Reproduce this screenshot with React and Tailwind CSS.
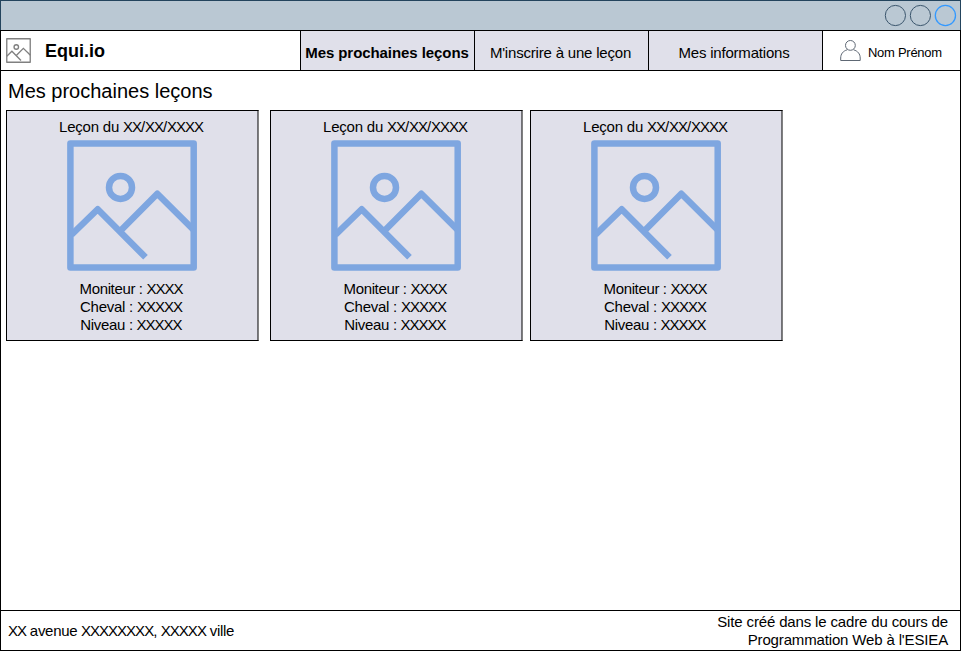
const lessons = [
  { id: 1, spacing: 'mr-[11px]' },
  { id: 2, spacing: 'mr-[7px]' },
  { id: 3, spacing: '' },
];

function Placeholder({ children }) {
  return <span className="tracking-[-1px]">{children}</span>;
}

function LessonPicture() {
  return (
    <svg viewBox="0 0 130 131" className="mt-[4px] block h-[131px] w-[130px]" fill="none" stroke="#7ea6e0" strokeWidth="6.5">
      <rect x="3.4" y="3.6" width="123.3" height="123.8" strokeLinejoin="round" />
      <circle cx="53.5" cy="47.4" r="11.5" />
      <path d="M4.5 94.8 L30.7 69.2 L78.5 117.3" strokeLinejoin="round" />
      <path d="M53.5 90.7 L90.3 53.8 L126.5 89.8" strokeLinejoin="round" />
    </svg>
  );
}

function LogoPicture() {
  return (
    <svg viewBox="0 0 130 130" className="ml-[5px] block h-[25px] w-[25px]" fill="none" stroke="#808080" strokeWidth="7">
      <rect x="4" y="4" width="122" height="122" strokeLinejoin="round" />
      <circle cx="53.5" cy="46.8" r="11.7" />
      <path d="M4 95 L30.7 69 L78 117" />
      <path d="M53.5 90.5 L90.3 53.7 L127 90" />
    </svg>
  );
}

function LessonCard({ spacing }) {
  return (
    <article className={`flex h-[231px] w-[253px] shrink-0 flex-col items-center border border-black border-r-[#808080] bg-[#e0e0ea] pt-[7px] pr-[2px] text-[15px] leading-[18px] shadow-[inset_-1px_0_0_#707075] ${spacing}`}>
      <h2 className="mr-[1px] tracking-[-0.22px]">Leçon du <Placeholder>XX</Placeholder>/<Placeholder>XX</Placeholder>/<Placeholder>XXXX</Placeholder></h2>
      <LessonPicture />
      <div className="mt-[9px] mr-[1px] text-center">
        <p className="tracking-[-0.36px]">Moniteur : <Placeholder>XXXX</Placeholder></p>
        <p className="tracking-[-0.25px]">Cheval : <Placeholder>XXXXX</Placeholder></p>
        <p className="tracking-[-0.33px]">Niveau : <Placeholder>XXXXX</Placeholder></p>
      </div>
    </article>
  );
}

export default function App() {
  return (
    <div className="flex h-[651px] w-[961px] flex-col overflow-hidden bg-white font-['Liberation_Sans',Arial,sans-serif] text-black">
      <div className="flex h-[30px] shrink-0 justify-end border-x border-t border-[#23445d] bg-[#bac8d3] pt-[3px] pr-[3px]">
        <svg width="75" height="23" viewBox="0 0 75 23" fill="none">
          <circle cx="13.4" cy="11.5" r="10.1" stroke="#3b566d" />
          <circle cx="38.4" cy="11.5" r="10.1" stroke="#3b566d" />
          <circle cx="63.4" cy="11.5" r="10.1" stroke="#3399ff" strokeWidth="1.3" />
        </svg>
      </div>
      <div className="flex grow flex-col border border-black">
        <header className="flex h-[40px] shrink-0 border-b border-black">
          <div className="flex w-[299px] items-center">
            <LogoPicture />
            <span className="ml-[14px] text-[18px] leading-[22px] font-bold">Equi.io</span>
          </div>
          <nav className="flex text-[15px] leading-[18px]">
            <a className="flex w-[174px] items-center justify-center border-l border-black bg-[#e0e0ea] pt-[5px] pr-[1px] font-bold tracking-[-0.07px] whitespace-nowrap">Mes prochaines leçons</a>
            <a className="flex w-[174px] items-center justify-center border-l border-black bg-[#e0e0ea] pt-[5px] pr-[2px] tracking-[-0.19px] whitespace-nowrap">M'inscrire à une leçon</a>
            <a className="flex w-[175px] items-center justify-center border-x border-black bg-[#e0e0ea] pt-[5px] pr-[3px] tracking-[-0.2px] whitespace-nowrap">Mes informations</a>
          </nav>
          <div className="flex grow items-start">
            <svg width="22" height="22" viewBox="0 0 22 22" fill="none" stroke="#5f6874" className="mt-[9px] ml-[17px] shrink-0">
              <circle cx="10.4" cy="5.4" r="4.9" />
              <path d="M7.2 9.8C3 11 0.7 14 0.7 18V20.5H20.2V18C20.2 14 17.8 11 13.6 9.8" />
            </svg>
            <span className="mt-[14px] ml-[6px] text-[13px] leading-[15px] tracking-[-0.28px] whitespace-nowrap">Nom Prénom</span>
          </div>
        </header>
        <main className="grow pl-[5px]">
          <h1 className="flex h-[39px] items-center pt-[1px] pl-[2px] text-[20px] leading-[24px]">Mes prochaines leçons</h1>
          <section className="flex">
            {lessons.map(({ id, spacing }) => (
              <LessonCard key={id} spacing={spacing} />
            ))}
          </section>
        </main>
        <footer className="flex h-[40px] shrink-0 items-center justify-between border-t border-black pr-[12px] pl-[7px] text-[15px] leading-[18px]">
          <p className="tracking-[-0.31px]">
            <Placeholder>XX</Placeholder> avenue <Placeholder>XXXXXXXX</Placeholder>, <Placeholder>XXXXX</Placeholder> ville
          </p>
          <p className="text-right tracking-[-0.15px]">
            Site créé dans le cadre du cours de
            <br />
            Programmation Web à l'ESIEA
          </p>
        </footer>
      </div>
    </div>
  );
}
